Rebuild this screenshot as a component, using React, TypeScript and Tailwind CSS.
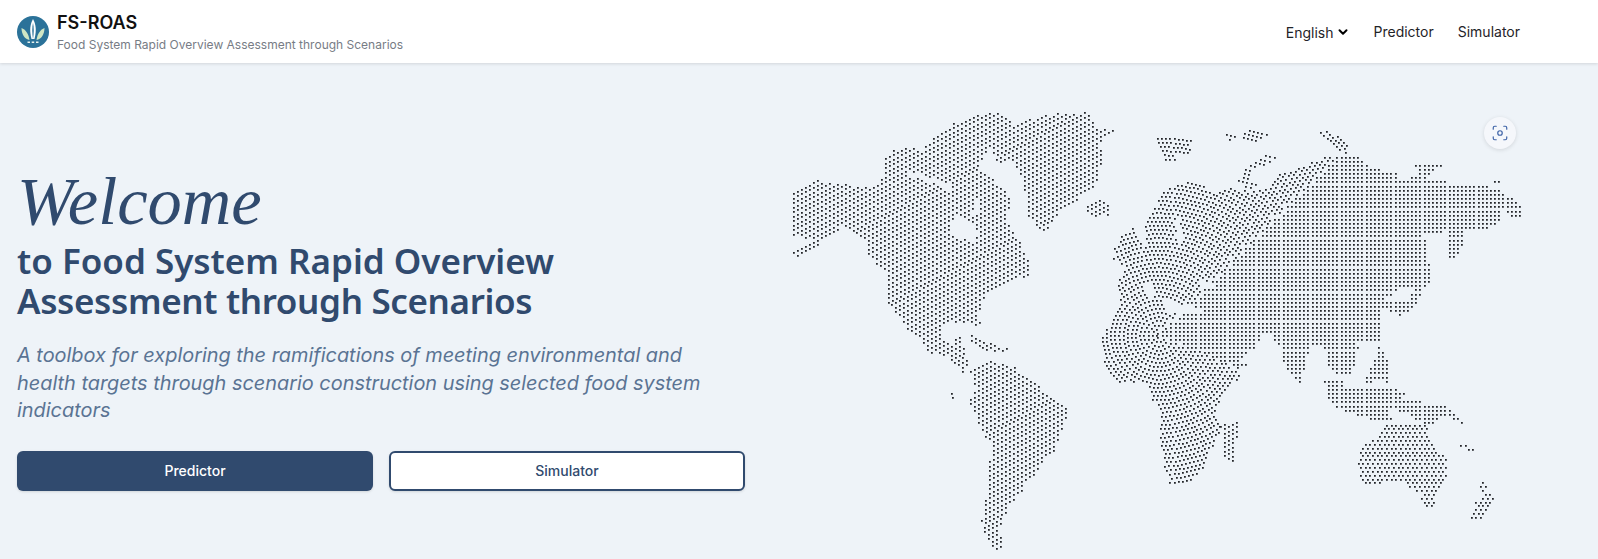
import { ChevronDown, Focus } from "lucide-react";

type Pt = [number, number];
const Z = (ox: number, oy: number, a: number[]): Pt[] => {
  const out: Pt[] = [];
  for (let i = 0; i < a.length; i += 2) out.push([a[i] / 3 + ox, a[i + 1] / 3 + oy]);
  return out;
};
const z4 = (a: number[]) => Z(780, 100, a);
const z6 = (a: number[]) => Z(1080, 110, a);
const z7 = (a: number[]) => Z(1080, 300, a);
const z8 = (a: number[]) => Z(860, 300, a);

const inside = (p: Pt, poly: Pt[]) => {
  let c = false;
  for (let i = 0, j = poly.length - 1; i < poly.length; j = i++) {
    const [xi, yi] = poly[i];
    const [xj, yj] = poly[j];
    if (yi > p[1] !== yj > p[1] && p[0] < ((xj - xi) * (p[1] - yi)) / (yj - yi) + xi) c = !c;
  }
  return c;
};

const northAmerica: Pt[] = [
  ...z4([
    30, 400, 30, 335, 32, 275, 100, 240, 175, 245, 260, 262, 295, 247, 305, 225, 312, 175, 338, 147, 385, 137, 430, 152, 440,
    125, 465, 107, 490, 92, 520, 67, 580, 42, 650, 35, 675, 42, 700, 72, 785, 42, 930, 35, 943, 85, 1003, 85, 953, 130, 968,
    155, 943, 260, 843, 325, 800, 393, 770, 378, 742, 345, 732, 270, 715, 210, 695, 175, 655, 185, 625, 140, 590, 195, 665,
    260, 698, 305, 670, 350, 690, 385, 720, 425, 748, 490, 743, 522, 680, 548, 640, 563, 610, 590, 590, 650,
  ]),
  ...z8([
    360, 60, 350, 85, 330, 70, 280, 65, 245, 80, 250, 125, 280, 130, 285, 112, 298, 110, 318, 155, 322, 200, 310, 218, 285,
    195, 255, 165, 200, 152, 185, 120, 150, 102, 130, 65, 85, 15, 75, 0,
  ]),
  ...z4([317, 600, 317, 520, 262, 460, 257, 420, 190, 373, 120, 425, 30, 400]),
];
const alaskaTail = z4([36, 445, 110, 418, 115, 430, 60, 465, 36, 465]);
const naHoles: Pt[][] = [
  z4([505, 378, 525, 340, 560, 360, 580, 372, 590, 400, 575, 425, 530, 410, 505, 395]),
  z4([378, 220, 385, 212, 520, 255, 510, 268]),
  z4([582, 300, 600, 280, 597, 340, 575, 340]),
];
const southAmerica = z8([
  395, 178, 410, 185, 460, 195, 485, 222, 530, 250, 550, 280, 600, 305, 624, 320, 610, 370, 597, 415, 580, 450, 545, 485, 540,
  505, 490, 550, 487, 575, 447, 605, 435, 632, 427, 660, 410, 695, 434, 720, 420, 747, 396, 744, 375, 715, 360, 660, 373, 600,
  380, 540, 380, 485, 397, 470, 395, 432, 370, 410, 345, 345, 320, 298, 345, 260, 330, 212, 360, 195,
]);
const caribbean = z8([322, 100, 358, 108, 372, 125, 405, 130, 442, 145, 430, 154, 358, 154, 355, 130, 322, 125]);
const iceland = z6([18, 285, 60, 266, 92, 278, 86, 312, 45, 324, 18, 305]);
const madagascar = z7([420, 375, 465, 358, 478, 370, 470, 400, 457, 485, 435, 482, 420, 455, 425, 410]);
const novaya = z6([468, 210, 495, 175, 560, 130, 590, 140, 570, 160, 530, 172, 505, 190, 518, 215, 550, 235, 490, 232]);
const franz1 = z6([433, 63, 477, 68, 470, 88, 448, 90]);
const franz2 = z6([488, 65, 520, 50, 568, 70, 525, 92, 488, 84]);

const eurasia: Pt[] = [
  ...z6([
    62, 682, 105, 600, 120, 575, 108, 540, 113, 510, 135, 470, 95, 442, 105, 400, 125, 375, 165, 343, 175, 400, 195, 400, 190,
    335, 225, 290, 240, 250, 265, 235, 300, 218, 350, 212, 380, 232, 405, 245, 455, 230, 470, 240, 540, 235, 565, 235, 590,
    180, 640, 185, 655, 170, 690, 155, 745, 130, 835, 130, 860, 170, 945, 183, 950, 210, 1010, 198, 1065, 210, 1125, 217, 1240,
    228, 1270, 250, 1316, 275, 1323, 326, 1290, 326, 1275, 290, 1255, 300, 1255, 337, 1195, 362, 1150, 362, 1150, 400, 1130,
    435, 1095, 447, 1093, 385, 1105, 360, 1030, 375, 1040, 445, 1052, 505, 1020, 550, 1015, 580, 955, 618, 915, 592, 915, 560,
    945, 575, 985, 565, 1000, 530, 950, 530, 905, 590,
  ]),
  ...z7([
    905, 125, 830, 125, 832, 145, 815, 220, 760, 218, 740, 190, 735, 150, 712, 130, 690, 132, 660, 245, 648, 245, 620, 215,
    603, 180, 605, 135, 585, 130, 575, 100, 545, 100, 535, 118, 520, 147, 490, 158, 480, 182, 502, 192, 470, 200, 477, 225, 440,
    272, 410, 310, 405, 360, 422, 380, 415, 395, 382, 470, 360, 512, 332, 540, 270, 550, 252, 510, 250, 480, 240, 440, 235, 400,
    240, 350, 235, 320, 213, 300, 200, 255, 175, 245, 130, 247, 90, 234, 68, 190, 62, 112,
  ]),
];
const euHoles: Pt[][] = [
  z6([190, 522, 215, 508, 225, 550, 200, 565]),
  z6([240, 575, 265, 565, 300, 578, 350, 592, 372, 612, 262, 605]),
  z6([342, 505, 400, 518, 412, 532, 370, 528]),
  z6([280, 335, 296, 320, 306, 390, 292, 397]),
];
const oldSmall: Pt[][] = [
  z6([226, 84, 285, 73, 342, 85, 322, 128, 285, 128, 287, 150, 255, 147, 232, 118]),
  z6([703, 65, 747, 60, 800, 98, 806, 132, 780, 132, 740, 97]),
  z6([983, 153, 1078, 153, 1082, 170, 1050, 180, 1050, 197, 1015, 207, 1005, 170]),
  z6([1240, 213, 1262, 213, 1262, 222, 1240, 222]),
  z7([883, 138, 902, 138, 922, 180, 928, 247, 895, 237, 880, 242, 848, 252, 863, 205, 883, 170]),
  z7([
    728, 238, 787, 236, 797, 262, 945, 263, 970, 278, 968, 295, 1012, 300, 1042, 313, 1088, 310, 1112, 325, 1152, 367, 1133,
    367, 1100, 342, 1072, 345, 1067, 367, 1020, 367, 980, 337, 927, 320, 932, 355, 848, 355, 788, 340, 783, 324, 758, 314, 743,
    290,
  ]),
];
const australia = z7([
  913, 370, 1042, 370, 1042, 405, 1072, 450, 1100, 468, 1097, 517, 1083, 550, 1078, 577, 1062, 580, 1062, 615, 1052, 630, 1025,
  617, 1018, 582, 988, 562, 975, 537, 905, 547, 848, 555, 830, 497, 843, 428, 878, 418,
]);
const nz = z7([1205, 537, 1222, 552, 1217, 570, 1248, 588, 1227, 606, 1197, 658, 1163, 658, 1188, 597, 1213, 585, 1197, 565]);

const W = 1.8;
const cx = 1158;
const cy = 335;
const pts: Pt[] = [];

const lattice = (polys: Pt[][], holes: Pt[][], a: Pt, b: Pt, origin: Pt) => {
  for (let i = -260; i < 260; i++) {
    for (let j = -260; j < 260; j++) {
      const p: Pt = [origin[0] + i * a[0] + j * b[0], origin[1] + i * a[1] + j * b[1]];
      if (p[0] < 785 || p[0] > 1530 || p[1] < 105 || p[1] > 556) continue;
      if (polys.some((q) => inside(p, q)) && !holes.some((q) => inside(p, q))) pts.push(p);
    }
  }
};

const west: Pt[][] = [northAmerica, alaskaTail, southAmerica, caribbean, iceland, madagascar];
lattice(west, naHoles, [3.95, 2.45], [4.0, -2.1], [900, 250]);
lattice([novaya, franz1, franz2], [], [4.2, 0.9], [0.9, -4.2], [1240, 150]);
lattice([australia, nz], [], [4.7, 0], [2.35, 3.85], [1400, 440]);

const inGrid = (dx: number, dy: number) => dx > 0 && dy > -dx && dy < dx * 0.4;
const oldWorld = [eurasia, ...oldSmall];
const oldHit = (p: Pt) => oldWorld.some((q) => inside(p, q)) && !euHoles.some((q) => inside(p, q));

const gridPts: Pt[] = [];
for (let i = 0; i < 100; i++) {
  for (let j = -60; j < 60; j++) {
    const p: Pt = [cx + i * 4.15, cy + j * 4.15];
    if (inGrid(p[0] - cx, p[1] - cy) && oldHit(p)) gridPts.push(p);
  }
}
const clashes = (p: Pt) => {
  for (const g of gridPts) {
    if (Math.abs(g[0] - p[0]) < 3.2 && Math.abs(g[1] - p[1]) < 3.2) return true;
  }
  return false;
};
pts.push(...gridPts);
for (let k = 0; k < 110; k++) {
  const r = 2.2 + k * 4.15;
  const n = Math.max(6, Math.round((2 * Math.PI * r) / 4.15));
  for (let i = 0; i < n; i++) {
    const t = (i * 2 * Math.PI) / n;
    const p: Pt = [cx + r * Math.cos(t), cy + r * Math.sin(t)];
    if (!inGrid(p[0] - cx, p[1] - cy) && oldHit(p) && !clashes(p)) pts.push(p);
  }
}
pts.push([950.5, 392.5], [951.5, 396.5], [1460, 445], [1465, 445], [1468, 449], [1472, 449]);

const dotPath = pts
  .map(([x, y]) => `M${Math.round(x)} ${Math.round(y)}h${W}v${W}h-${W}z`)
  .join("");

function Logo() {
  return (
    <svg width="32" height="32" viewBox="0 0 32 32" className="shrink-0">
      <circle cx="16" cy="16" r="16" fill="#2b7299" />
      <path d="M4.500 12c4 1.500 7 5.500 8 12-4.500-.5-8-5.500-8-12z" fill="#cfe6c4" />
      <path d="M27.500 12c-4 1.500-7 5.500-8 12 4.500-.5 8-5.500 8-12z" fill="#cfe6c4" />
      <path d="M16 3c-2.800 5-3.800 11-1.500 20h3c2.300-9 1.300-15-1.500-20z" fill="#ffffff" />
      <path d="M16 7c-1 4.500-1 10 0 16 1-6 1-11.500 0-16z" fill="#2b7299" />
      <rect x="10.500" y="25.500" width="2.500" height="1.500" fill="#e8f2ee" />
      <rect x="14.700" y="25.500" width="2.500" height="1.500" fill="#e8f2ee" />
      <rect x="19" y="25.500" width="2.500" height="1.500" fill="#e8f2ee" />
    </svg>
  );
}

export default function App() {
  return (
    <div className="flex h-[559px] w-full flex-col overflow-hidden bg-[#eef3f8] font-['Inter',sans-serif]">
      <header className="relative z-10 flex h-[63px] shrink-0 items-center justify-between bg-white pl-[17px] pr-[78px] shadow-[0_1px_3px_rgba(0,0,0,0.12)]">
        <div className="flex items-center gap-2">
          <Logo />
          <div className="flex flex-col pt-[1px]">
            <span className="text-[18px] leading-[23px] font-semibold text-[#111111]">FS-ROAS</span>
            <span className="mt-[3px] text-[12px] leading-[16px] text-[#777c85]">
              Food System Rapid Overview Assessment through Scenarios
            </span>
          </div>
        </div>
        <nav className="flex items-center gap-6 text-[14px] text-[#1f2328]">
          <span className="flex items-center gap-[2px] pt-[1px]">
            English
            <ChevronDown size={14} strokeWidth={3.4} className="text-black" />
          </span>
          <span>Predictor</span>
          <span>Simulator</span>
        </nav>
      </header>
      <main className="relative flex flex-1">
        <section className="flex w-[780px] shrink-0 flex-col justify-center pt-[34px] pl-[17px] pr-[35px]">
          <h1 className="font-['Liberation_Serif',serif] text-[68.5px] leading-[72px] font-normal text-[#304a6e] italic">
            Welcome
          </h1>
          <h2 className="mt-[4px] font-['Noto_Sans',sans-serif] text-[35px] leading-[40px] font-semibold text-[#304a6e]">
            to Food System Rapid Overview
            <br />
            <span className="tracking-[-0.35px]">Assessment through Scenarios</span>
          </h2>
          <p className="mt-[21px] max-w-[700px] text-[19.9px] leading-[27.5px] font-normal text-[#5a7393] italic">
            A toolbox for exploring the ramifications of meeting environmental and health targets through scenario construction
            using selected food system indicators
          </p>
          <div className="mt-[26px] grid grid-cols-2 gap-4">
            <button className="h-[40px] rounded-md bg-[#304a6e] text-[14px] font-medium text-white shadow-sm">Predictor</button>
            <button className="h-[40px] rounded-md border-2 border-[#304a6e] bg-white text-[14px] font-medium text-[#304a6e] shadow-sm">
              Simulator
            </button>
          </div>
        </section>
        <div className="min-w-0 flex-1">
          <svg viewBox="780 63 818 496" className="block h-full w-full" aria-label="World map">
            <path d={dotPath} fill="#222428" />
          </svg>
        </div>
        <button className="absolute top-[54px] left-[1484px] flex h-8 w-8 items-center justify-center rounded-full bg-[#f5f7fb] text-[#3f64a8] shadow-[0_1px_4px_rgba(0,0,0,0.12)]">
          <Focus size={18} strokeWidth={1.6} />
        </button>
      </main>
    </div>
  );
}
